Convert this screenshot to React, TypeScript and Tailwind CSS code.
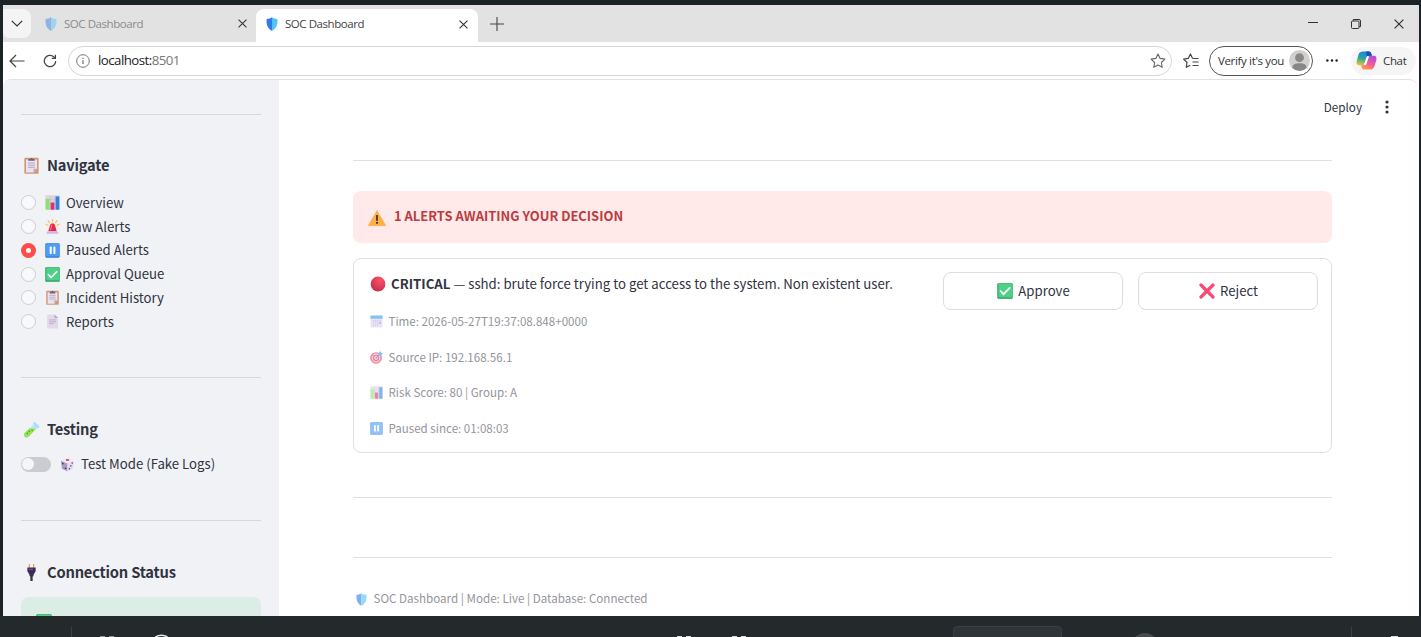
import React, { useState } from "react";

type EmojiName =
  | "shield"
  | "clipboard"
  | "chart"
  | "siren"
  | "pause"
  | "check"
  | "page"
  | "tube"
  | "dice"
  | "plug"
  | "warning"
  | "red"
  | "calendar"
  | "target"
  | "cross";

const emojiShapes: Record<EmojiName, React.ReactNode> = {
  shield: (
    <>
      <path d="M8 .3C6.200 1.600 4.200 2 1.900 2.200 1.200 8.500 3 13.300 8 15.700z" fill="#2f7be6" />
      <path d="M8 .3c1.800 1.300 3.800 1.700 6.100 1.900.7 6.300-1.100 11.100-6.100 13.500z" fill="#55c3fb" />
    </>
  ),
  clipboard: (
    <>
      <rect x="1.300" y=".8" width="13.400" height="15" rx="1" fill="#d3976f" />
      <path d="M2.800 2.300h10.400v8.700l-3.300 3.600H2.800z" fill="#eae2f0" />
      <path d="M13.200 11l-3.300 3.600V11z" fill="#b9a8c8" />
      <path d="M5 3.600V1.800h1.700a1.400 1.400 0 0 1 2.600 0H11v1.800z" fill="#6d6478" />
      <path d="M4.700 5.700h6.600M4.700 7.700h6.600M4.700 9.700h6.600" stroke="#b3a6bf" strokeWidth=".9" />
    </>
  ),
  chart: (
    <>
      <rect x=".3" y=".3" width="15.400" height="15.400" rx="1" fill="#ddd3e3" />
      <path d="M5.500.5v15M10.500.5v15M.5 5h15M.5 10h15" stroke="#c2b5cc" strokeWidth=".5" />
      <rect x=".8" y="4" width="4" height="11.700" fill="#8ce36b" />
      <rect x="6" y="8" width="4" height="7.700" fill="#e52e6d" />
      <rect x="11.300" y="1.500" width="4" height="14.200" fill="#2c83df" />
    </>
  ),
  siren: (
    <>
      <path d="M3.500 13L5.400 6.300c.7-2.100 4.500-2.100 5.200 0L12.500 13z" fill="#ed2647" />
      <path d="M7.400 6.300l-1.700 5.500" stroke="#ff7b91" strokeWidth="1.200" />
      <path d="M1.300 15.700l1.300-2.700h10.800l1.300 2.700z" fill="#cbbbe2" />
      <path d="M8 .3v2.700M3.200 1.800l1.500 2M12.800 1.800l-1.500 2M1 5.700l2 1M15 5.700l-2 1" stroke="#ffc33d" strokeWidth="1.200" strokeLinecap="round" />
    </>
  ),
  pause: (
    <>
      <rect x=".3" y=".3" width="15.400" height="15.400" rx="1.200" fill="#2e78dc" />
      <rect x="1.100" y=".7" width="14" height="13.800" rx=".8" fill="#4c9bf8" />
      <rect x="5" y="3.800" width="2.200" height="7.800" rx=".6" fill="#fff" />
      <rect x="8.900" y="3.800" width="2.200" height="7.800" rx=".6" fill="#fff" />
    </>
  ),
  check: (
    <>
      <rect x=".3" y=".3" width="15.400" height="15.400" rx="1" fill="#259c5a" />
      <rect x="1.300" y=".7" width="14" height="13.800" rx=".8" fill="#4dd087" />
      <path d="M3.500 8l3 3.200 6.200-6.400" fill="none" stroke="#fff" strokeWidth="1.700" strokeLinecap="round" />
    </>
  ),
  page: (
    <>
      <path d="M2.300.5h7.900l3.700 3.700v11.300H2.300z" fill="#e2d9ea" />
      <path d="M10.200.5v3.700h3.700z" fill="#b6a7c6" />
      <path d="M4.300 6.300h7.500M4.300 8.300h7.500M4.300 10.300h5" stroke="#b8aac5" strokeWidth=".9" />
    </>
  ),
  tube: (
    <>
      <path d="M1.300 11.500l9-8.700 3.200 3.200-8.300 8.800c-2.600 2-5.600-.9-3.900-3.300z" fill="#bfe4fb" />
      <path d="M1.300 11.500l4.700-4.500 6.500.1-7.300 7.700c-2.600 2-5.600-.9-3.900-3.300z" fill="#9ae34b" />
      <path d="M9.300 2.500l1.700-1.700 4.600 4.600L14 7.100z" fill="#a9dbfb" />
      <path d="M4 11.500l.2.200M5.800 9.600l.2.200M8.500 8.800l.2.200" stroke="#3aa544" strokeWidth="1.300" strokeLinecap="round" />
    </>
  ),
  dice: (
    <>
      <path d="M1 4l7-3.200L15 4l-7 3z" fill="#eee7f4" />
      <path d="M1 4l7 3v8.500l-6-3z" fill="#ac9bbd" />
      <path d="M15 4L8 7v8.500l6-3z" fill="#e6dcef" />
      <ellipse cx="8" cy="3.200" rx="1.900" ry="1" fill="#ed4051" />
      <circle cx="3" cy="7" r=".9" fill="#4b286f" />
      <circle cx="6" cy="12" r=".9" fill="#4b286f" />
      <circle cx="13" cy="6.500" r=".8" fill="#4b286f" />
      <circle cx="11.500" cy="9.500" r=".8" fill="#4b286f" />
      <circle cx="10" cy="12.600" r=".8" fill="#4b286f" />
    </>
  ),
  plug: (
    <>
      <path d="M6 0v4M10 0v4" stroke="#e4a267" strokeWidth="1.200" />
      <path d="M4.100 3.300h7.800v3.600L9.900 10v1.500H6.100V10l-2-3.100z" fill="#3c2c55" />
      <path d="M8 10v6" stroke="#3b3040" strokeWidth="2.200" />
      <path d="M5.500 5h4" stroke="#74618d" strokeWidth="1" />
    </>
  ),
  warning: (
    <>
      <path d="M8 1.300l7.800 13.500H.2z" fill="#ffb045" stroke="#f4a044" strokeWidth=".4" strokeLinejoin="round" />
      <path d="M7.200 5.300h1.600v5.200H7.200z" fill="#433345" />
      <circle cx="8" cy="12.300" r="1" fill="#433345" />
    </>
  ),
  red: (
    <>
      <defs>
        <radialGradient id="redBall" cx=".65" cy=".25" r=".8">
          <stop offset="0" stopColor="#fb5068" />
          <stop offset="1" stopColor="#c42f4c" />
        </radialGradient>
      </defs>
      <circle cx="8" cy="8" r="7.400" fill="url(#redBall)" />
    </>
  ),
  calendar: (
    <>
      <rect x=".5" y=".5" width="15" height="15" rx="1" fill="#ddd3ee" />
      <path d="M.5 4.500V1.700Q.5.500 1.700.5h12.600q1.200 0 1.200 1.200v2.800z" fill="#3798f4" />
      <path d="M3.600 7.200h9.500M3.600 9.900h9.500M3.600 12.600h6.500" stroke="#a998c4" strokeWidth="1.300" strokeDasharray="1.300 1.500" />
      <path d="M11.800 9.900h1.600" stroke="#2589ef" strokeWidth="1.700" />
    </>
  ),
  target: (
    <>
      <circle cx="7.400" cy="8.600" r="7.200" fill="#df335e" />
      <circle cx="7.400" cy="8.600" r="5.400" fill="#fbe8ee" />
      <circle cx="7.400" cy="8.600" r="4.200" fill="#df335e" />
      <circle cx="7.400" cy="8.600" r="2.300" fill="#f5ccd6" />
      <circle cx="7.400" cy="8.600" r="1" fill="#df335e" />
      <path d="M7.500 8.500L12 4" stroke="#725078" strokeWidth="1" />
      <path d="M10 6.200V3L13 0l.5 2.500 2.500.7-2.800 3z" fill="#2e9bf0" />
    </>
  ),
  cross: (
    <path d="M2 2l12 12M14 2L2 14" stroke="#fa4a74" strokeWidth="3.200" strokeLinecap="round" />
  ),
};

interface EmojiProps {
  name: EmojiName;
  className?: string;
}

const Emoji: React.FC<EmojiProps> = ({ name, className = "size-[15px]" }) => (
  <svg viewBox="0 0 16 16" className={`shrink-0 ${className}`} aria-hidden="true">
    {emojiShapes[name]}
  </svg>
);

const CloseIcon = ({ className = "size-[9px]" }: { className?: string }) => (
  <svg viewBox="0 0 10 10" className={className} fill="none" stroke="#333" strokeWidth="1.200">
    <path d="M.6.6l8.800 8.800M9.400.6L.6 9.400" />
  </svg>
);

/* Browser tabs and window buttons */
const TabStrip = () => (
  <div className="flex h-[37px] shrink-0 items-end bg-[#e2e2e2]">
    <div className="mb-1 flex h-[29px] w-7 items-center justify-center rounded-r-lg rounded-bl-md bg-[#f4f4f4]">
      <svg viewBox="0 0 12 7" className="h-[7px] w-3" fill="none" stroke="#333" strokeWidth="1.200">
        <path d="M.8.8L6 6 11.200.8" />
      </svg>
    </div>
    <div className="flex h-[37px] w-[225px] items-center rounded-br-lg pl-[13px]">
      <Emoji name="shield" className="size-[14px] opacity-45" />
      <span className="ml-[6px] flex-1 text-[11.500px] tracking-[-0.45px] text-[#8b8b8b]">SOC Dashboard</span>
      <CloseIcon className="mr-[9px] size-[9px]" />
    </div>
    <div className="flex h-[33px] w-[222px] items-center rounded-t-lg bg-white pb-[3px] pl-[9px]">
      <Emoji name="shield" className="size-[14px]" />
      <span className="ml-[6px] flex-1 text-[11.500px] tracking-[-0.45px] text-[#444]">SOC Dashboard</span>
      <CloseIcon className="mr-[10px] size-[9px]" />
    </div>
    <svg viewBox="0 0 14 14" className="mb-[11px] ml-[12px] size-[14px]" stroke="#444" strokeWidth="1.100">
      <path d="M7 0v14M0 7h14" />
    </svg>
    <div className="ml-auto flex h-[37px] items-center gap-[33px] pr-[15px]">
      <span className="mb-[2px] h-px w-[10px] bg-[#333]" />
      <svg viewBox="0 0 10 10" className="size-[10px]" fill="none" stroke="#333">
        <rect x=".5" y="2" width="7.500" height="7.500" rx="1" />
        <path d="M2.300 2V.5h5.700q1.500 0 1.500 1.500v5.700H8" />
      </svg>
      <CloseIcon className="size-[10px]" />
    </div>
  </div>
);

const CopilotLogo = () => (
  <svg viewBox="0 0 22 20" className="h-[19px] w-[21px]">
    <defs>
      <linearGradient id="cpBlue" x1=".5" y1="0" x2=".3" y2="1">
        <stop offset="0" stopColor="#1687dc" />
        <stop offset=".5" stopColor="#2ba6a0" />
        <stop offset="1" stopColor="#f0c427" />
      </linearGradient>
      <linearGradient id="cpPink" x1=".7" y1="0" x2=".3" y2="1">
        <stop offset="0" stopColor="#a650e8" />
        <stop offset=".5" stopColor="#f0579a" />
        <stop offset="1" stopColor="#ff9652" />
      </linearGradient>
    </defs>
    <path d="M7.500.5h6c1.500 0 2.200 1 2.600 2.500l.6 2H14c-2 0-2.700 1-3.200 2.700L9 13.500c-.5 1.300-1.200 1.700-2.500 1.700H3.200C.8 15.200 0 13 .7 10.500l2-7C3.400 1.400 5 .5 7.500.5z" fill="url(#cpBlue)" />
    <path d="M14.500 19.500h-6c-1.500 0-2.200-1-2.600-2.500l-.6-1.900H8c1.500 0 2.300-.9 2.800-2.600L12.500 7c.5-1.500 1.200-2 2.500-2h3.800c2.400 0 3.200 2.200 2.500 4.700l-2 6.300c-.7 2.500-2.300 3.500-4.800 3.500z" fill="url(#cpPink)" />
    <path d="M10.500.5h3c1.500 0 2.200 1 2.600 2.500l.6 2H14c-1.200 0-2 .4-2.500 1.200z" fill="#164eb8" />
    <path d="M12.300 6.500L9.700 13.800" stroke="#fff" strokeWidth="2.200" strokeLinecap="round" />
  </svg>
);

const Toolbar = () => (
  <div className="flex h-[37px] shrink-0 items-center bg-white">
    <svg viewBox="0 0 16 14" className="ml-[6px] h-[14px] w-4" fill="none" stroke="#444" strokeWidth="1.200">
      <path d="M15.500 7H1M7 1L1 7l6 6" />
    </svg>
    <svg viewBox="0 0 15 15" className="ml-[18px] size-[14px]" fill="none" stroke="#444" strokeWidth="1.300">
      <path d="M13.600 7.500A6.100 6.100 0 1 1 11.500 2.900l1.600 1.500" />
      <path d="M13.300.7v4H9.300" />
    </svg>
    <div className="ml-[11px] flex h-[30px] w-[1104px] items-center rounded-full border border-[#d6d6d6] pl-[7px]">
      <svg viewBox="0 0 14 14" className="size-[14px]" fill="none" stroke="#777">
        <circle cx="7" cy="7" r="6.300" />
        <path d="M7 6.200V10M7 3.800v1.200" strokeWidth="1.300" />
      </svg>
      <span className="ml-2 flex-1 text-[13.300px] tracking-[-0.55px] text-[#222]">
        localhost:<span className="text-[#777]">8501</span>
      </span>
      <svg viewBox="0 0 16 16" className="mr-[5px] size-4" fill="none" stroke="#666" strokeWidth="1.100" strokeLinejoin="round">
        <path d="M8 1l2.100 4.400 4.800.7-3.500 3.400.8 4.800L8 12l-4.200 2.300.8-4.800L1.100 6.100l4.800-.7z" />
      </svg>
    </div>
    <svg viewBox="0 0 16 16" className="ml-[11px] size-4" fill="none" stroke="#444" strokeWidth="1.200" strokeLinejoin="round">
      <path d="M9.500 5.300L7.400 1 5.300 5.400.6 6.100 4 9.500l-.8 4.800 4-2.100M9.500 5.500h6M9.500 9h6M9.500 12.500h6" />
    </svg>
    <div className="ml-[10px] flex h-[30px] w-[104px] items-center rounded-full border-[1.500px] border-[#555] pl-[8px]">
      <span className="flex-1 whitespace-nowrap text-[11.500px] tracking-[-0.35px] text-[#333]">Verify it's you</span>
      <svg viewBox="0 0 22 22" className="mr-[2px] size-[21px] rounded-full bg-[#d2d0ce]" fill="#8a8886">
        <circle cx="11" cy="8" r="4.600" />
        <path d="M3.500 18.500c0-3 3-4.500 7.500-4.500s7.500 1.500 7.500 4.500Q15.500 22 11 22t-7.500-3.500z" />
      </svg>
    </div>
    <svg viewBox="0 0 12 3" className="ml-[13px] h-[3px] w-3" fill="#222">
      <circle cx="1.400" cy="1.500" r="1.200" />
      <circle cx="6" cy="1.500" r="1.200" />
      <circle cx="10.600" cy="1.500" r="1.200" />
    </svg>
    <div className="ml-[13px] flex h-[28px] w-[65px] items-center rounded-full bg-[#f5f5f5] pl-[5px]">
      <CopilotLogo />
      <span className="ml-[6px] text-[11.500px] tracking-[-0.35px] text-[#333]">Chat</span>
    </div>
  </div>
);

interface NavItem {
  label: string;
  icon: EmojiName;
}

const navItems: NavItem[] = [
  { label: "Overview", icon: "chart" },
  { label: "Raw Alerts", icon: "siren" },
  { label: "Paused Alerts", icon: "pause" },
  { label: "Approval Queue", icon: "check" },
  { label: "Incident History", icon: "clipboard" },
  { label: "Reports", icon: "page" },
];

const SidebarHeading = ({ icon, children }: { icon: EmojiName; children: React.ReactNode }) => (
  <h3 className="flex h-[30px] items-center pl-[2px] text-[14.700px] font-bold tracking-[-0.2px] text-[#31333f]">
    <Emoji name={icon} className="mr-[7px] size-[17px]" />
    {children}
  </h3>
);

const Sidebar = () => {
  const [page, setPage] = useState("Paused Alerts");

  return (
    <aside className="w-[276px] shrink-0 overflow-hidden rounded-tl-lg bg-[#f0f2f6] px-[18px] pt-[34px]">
      <hr className="border-[#d6d8dd]" />
      <div className="mt-[35px]">
        <SidebarHeading icon="clipboard">Navigate</SidebarHeading>
      </div>
      <div className="mt-[11px]">
        {navItems.map((item) => (
          <button
            key={item.label}
            onClick={() => setPage(item.label)}
            className="flex h-[23.750px] w-full items-center text-[13.200px] text-[#31333f]"
          >
            {page === item.label ? (
              <span className="flex size-[15px] items-center justify-center rounded-full bg-[#ff4b4b]">
                <span className="size-[5px] rounded-full bg-white" />
              </span>
            ) : (
              <span className="size-[15px] rounded-full border border-[#cbcdd2] bg-[#f9f9fb]" />
            )}
            <Emoji name={item.icon} className="mr-[6px] ml-[9px] size-[15px]" />
            {item.label}
          </button>
        ))}
      </div>
      <hr className="mt-[43.500px] border-[#d6d8dd]" />
      <div className="mt-[36.500px]">
        <SidebarHeading icon="tube">Testing</SidebarHeading>
      </div>
      <div className="mt-[7.500px] flex h-6 items-center text-[13.200px] text-[#31333f]">
        <span className="flex h-[15px] w-[30px] items-center rounded-full bg-[#cbccd1] pl-[1px]">
          <span className="size-3 rounded-full bg-[#f4f5f8]" />
        </span>
        <Emoji name="dice" className="mr-[6px] ml-[9px] size-[15px]" />
        Test Mode (Fake Logs)
      </div>
      <hr className="mt-[44px] border-[#d6d8dd]" />
      <div className="mt-[36px]">
        <SidebarHeading icon="plug">Connection Status</SidebarHeading>
      </div>
      <div className="mt-[10px] h-[50px] rounded-lg bg-[#dcede6] px-[15px] pt-[17px]">
        <Emoji name="check" className="size-4" />
      </div>
    </aside>
  );
};

const details: { icon: EmojiName; text: string }[] = [
  { icon: "calendar", text: "Time: 2026-05-27T19:37:08.848+0000" },
  { icon: "target", text: "Source IP: 192.168.56.1" },
  { icon: "chart", text: "Risk Score: 80 | Group: A" },
  { icon: "pause", text: "Paused since: 01:08:03" },
];

const AlertCard = () => (
  <div className="mt-[15px] flex h-[195px] justify-between rounded-lg border border-[#dfe0e3] pt-[13px] pr-[13px] pl-4">
    <div>
      <div className="flex h-6 items-center whitespace-nowrap text-[13.220px] text-[#31333f]">
        <Emoji name="red" className="mr-[5px] size-4" />
        <p>
          <strong className="font-bold">CRITICAL</strong> — sshd: brute force trying to get access to the system. Non existent user.
        </p>
      </div>
      <div className="mt-[8px]">
        {details.map((detail) => (
          <div key={detail.text} className="flex h-[35.600px] items-center text-[11.570px] text-[#94959c]">
            <Emoji name={detail.icon} className="mr-[5.500px] size-[13px] opacity-60" />
            {detail.text}
          </div>
        ))}
      </div>
    </div>
    <div className="flex gap-[15px] text-[13.200px] text-[#31333f]">
      <button className="flex h-[38px] w-[180px] items-center justify-center rounded-lg border border-[#dcdde1] pb-[1px] pl-[1px]">
        <Emoji name="check" className="mr-[5px] size-4" />
        Approve
      </button>
      <button className="flex h-[38px] w-[180px] items-center justify-center rounded-lg border border-[#dcdde1] pb-[1px] pl-[1px]">
        <Emoji name="cross" className="mr-[5px] size-4" />
        Reject
      </button>
    </div>
  </div>
);

const MainPanel = () => (
  <main className="flex-1 overflow-hidden pr-[85px] pl-[74px]">
    <div className="-mr-[58px] flex h-[54px] items-center justify-end gap-[23px] text-[11.700px] text-[#31333f]">
      <span>Deploy</span>
      <svg viewBox="0 0 4 14" className="mr-[1px] h-[14px] w-1" fill="#31333f">
        <circle cx="2" cy="2" r="1.600" />
        <circle cx="2" cy="7" r="1.600" />
        <circle cx="2" cy="12" r="1.600" />
      </svg>
    </div>
    <hr className="mt-[26px] border-[#dfe0e3]" />
    <div className="mt-[30px] flex h-[52px] items-center rounded-lg bg-[#ffe9e9] pb-[2px] pl-[15px] text-[12.950px] font-bold text-[#bd3b40]">
      <Emoji name="warning" className="mt-[4px] mr-[8px] size-[18px]" />
      1 ALERTS AWAITING YOUR DECISION
    </div>
    <AlertCard />
    <hr className="mt-[44px] border-[#dfe0e3]" />
    <hr className="mt-[59px] border-[#dfe0e3]" />
    <footer className="mt-[29px] flex h-6 items-center pl-[2px] text-[11.620px] text-[#94959c]">
      <Emoji name="shield" className="mr-[5.500px] size-[13px] opacity-60" />
      SOC Dashboard | Mode: Live | Database: Connected
    </footer>
  </main>
);

/* Top edge of the desktop taskbar */
const Taskbar = () => (
  <svg viewBox="0 0 1421 21" className="h-[21px] w-full shrink-0 bg-[#242a2b]">
    <path d="M71.500 11v10M1351.500 11v10" stroke="#3c4142" />
    <path d="M100 20.500h5M109 20.500h5" stroke="#999" />
    <path d="M155.500 21Q161.500 17.500 167.500 21" stroke="#eee" strokeWidth="1.500" fill="none" />
    <path d="M677 20.500h5M686 20.500h5M732 20.500h5M741 20.500h5M1391 20.500h7" stroke="#ddd" />
    <rect x="953.500" y="10.500" width="108" height="20" rx="4" fill="#303438" stroke="#3b4042" />
    <circle cx="1145" cy="30" r="13" fill="#4a4b4c" />
  </svg>
);

const App: React.FC = () => {
  return (
    <div className="flex h-[637px] w-[1421px] flex-col overflow-hidden bg-[#1c2326] pt-[5px] font-['Open_Sans',sans-serif]">
      <div className="mr-[2px] ml-[3px] flex h-[611px] shrink-0 flex-col overflow-hidden bg-white">
        <TabStrip />
        <Toolbar />
        <div className="mr-[2px] flex min-h-0 flex-1 rounded-t-lg border-t border-[#e3e3e5] font-['Noto_Sans_CJK_SC',sans-serif]">
          <Sidebar />
          <MainPanel />
        </div>
      </div>
      <Taskbar />
    </div>
  );
};

export default App;
